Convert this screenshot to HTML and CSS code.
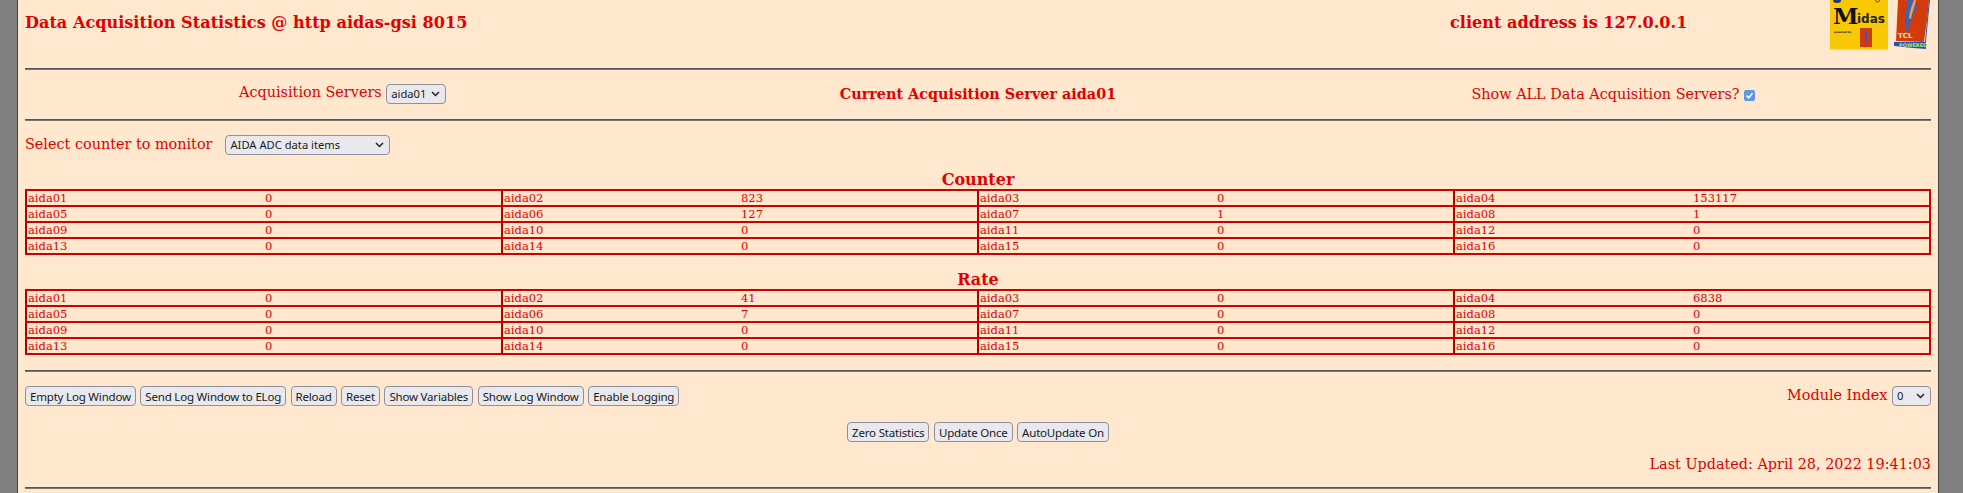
FILE: index.html
```html
<!DOCTYPE html>
<html lang="en">
<head>
<meta charset="utf-8">
<title>Data Acquisition Statistics</title>
<link rel="stylesheet" href="styles.css">
</head>
<body>
<main class="panel">
  <header class="top">
    <h1 class="title">Data Acquisition Statistics @ http aidas-gsi 8015</h1>
    <h1 class="title">client address is 127.0.0.1</h1>
    <div class="logos">
      <svg class="logo-midas" width="58" height="50" viewBox="0 0 58 50" role="img" aria-label="Midas">
        <rect width="58" height="49.500" fill="#f9c805"/>
        <ellipse cx="7" cy="0.500" rx="4" ry="2.500" fill="#1a3a70"/>
        <circle cx="47.500" cy="0" r="2" fill="none" stroke="#2a4a90"/>
        <text x="3" y="24" class="m-big">M</text>
        <text x="27" y="23" class="m-rest">idas</text>
        <text x="4" y="33" class="m-small">powered by</text>
        <rect x="30" y="28" width="12" height="19" fill="#d03a10"/>
        <path d="M36.500 30c-2 4-1 8-1 13h1c0-4 1-8 1-12z" fill="#3a5ab0"/>
      </svg>
      <svg class="logo-tcl" width="37" height="50" viewBox="0 0 37 50" role="img" aria-label="TCL powered">
        <path d="M5 0H36L35 12L31 42L3 41z" fill="#d23c0a"/>
        <path d="M1 42H33L33 49L20 48L1 46z" fill="#2458b0"/>
        <path d="M36 0H37L35 20L33 42H32L34 20z" fill="#2458b0"/>
        <path d="M15 0c-1 7-3 13-3 22c0 5 1 9 2 12c1-6 3-10 4-14c2-5 5-9 6-14l-2-6z" fill="#3d62b8"/>
        <path d="M21 0c-2 5-4 10-5 18l2 1c1-7 4-12 5-19z" fill="#f0a040"/>
        <text x="5" y="38" class="t-tcl">TCL</text>
        <text x="6" y="46.500" class="t-pow">POWERED</text>
      </svg>
    </div>
  </header>
  <hr class="rule">
  <section class="servers">
    <div class="servers-cell"><span class="label">Acquisition Servers</span> <select class="ctl server-select"><option>aida01</option></select></div>
    <div class="servers-cell"><strong class="current">Current Acquisition Server aida01</strong></div>
    <div class="servers-cell"><span class="label">Show ALL Data Acquisition Servers?</span> <input class="check" type="checkbox" checked></div>
  </section>
  <hr class="rule">
  <section class="monitor">
    <span class="label monitor-label">Select counter to monitor</span>
    <select class="ctl monitor-select"><option>AIDA ADC data items</option></select>
  </section>

  <h2 class="heading">Counter</h2>
  <table class="stats">
    <tr><td>aida01</td><td>0</td><td>aida02</td><td>823</td><td>aida03</td><td>0</td><td>aida04</td><td>153117</td></tr>
    <tr><td>aida05</td><td>0</td><td>aida06</td><td>127</td><td>aida07</td><td>1</td><td>aida08</td><td>1</td></tr>
    <tr><td>aida09</td><td>0</td><td>aida10</td><td>0</td><td>aida11</td><td>0</td><td>aida12</td><td>0</td></tr>
    <tr><td>aida13</td><td>0</td><td>aida14</td><td>0</td><td>aida15</td><td>0</td><td>aida16</td><td>0</td></tr>
  </table>

  <h2 class="heading heading-rate">Rate</h2>
  <table class="stats">
    <tr><td>aida01</td><td>0</td><td>aida02</td><td>41</td><td>aida03</td><td>0</td><td>aida04</td><td>6838</td></tr>
    <tr><td>aida05</td><td>0</td><td>aida06</td><td>7</td><td>aida07</td><td>0</td><td>aida08</td><td>0</td></tr>
    <tr><td>aida09</td><td>0</td><td>aida10</td><td>0</td><td>aida11</td><td>0</td><td>aida12</td><td>0</td></tr>
    <tr><td>aida13</td><td>0</td><td>aida14</td><td>0</td><td>aida15</td><td>0</td><td>aida16</td><td>0</td></tr>
  </table>

  <hr class="rule rule-lower">
  <section class="actions">
    <div class="btns">
      <button class="btn">Empty Log Window</button>
      <button class="btn">Send Log Window to ELog</button>
      <button class="btn">Reload</button>
      <button class="btn">Reset</button>
      <button class="btn">Show Variables</button>
      <button class="btn">Show Log Window</button>
      <button class="btn">Enable Logging</button>
    </div>
    <div class="module"><span class="label">Module Index</span> <select class="ctl module-select"><option>0</option></select></div>
  </section>
  <section class="center-btns">
    <button class="btn">Zero Statistics</button>
    <button class="btn">Update Once</button>
    <button class="btn">AutoUpdate On</button>
  </section>
  <p class="updated">Last Updated: April 28, 2022 19:41:03</p>
  <hr class="rule">
</main>
</body>
</html>
```
FILE: styles.css
```css
html, body {
  margin: 0;
  height: 100%;
  overflow: hidden;
}
body {
  background: #808080;
  font-family: "DejaVu Serif", serif;
  color: #e00000;
}
.panel {
  box-sizing: border-box;
  width: 1922px;
  height: 493px;
  margin-left: 17px;
  padding: 0 7px;
  background: #ffe8cd;
  border-left: 1px solid #444;
  border-right: 1px solid #444;
  overflow: hidden;
}
.top {
  display: grid;
  grid-template-columns: 1425px 1fr auto;
  height: 50px;
  margin-bottom: 18px;
}
.title {
  margin: 13px 0 0;
  font-size: 16.13px;
  font-weight: bold;
  line-height: 19px;
}
.logos {
  display: flex;
  gap: 5px;
  margin-right: 1px;
}
.rule {
  margin: 0;
  height: 0;
  border: 0;
  border-top: 1px solid #555;
  border-bottom: 1px solid #777;
}
.servers {
  box-sizing: border-box;
  display: grid;
  grid-template-columns: repeat(3, 1fr);
  align-items: center;
  height: 49px;
  padding-bottom: 2px;
}
.servers-cell {
  text-align: center;
  font-size: 14.4px;
}
.label {
  font-size: 14.4px;
}
.current {
  font-size: 14.4px;
  font-weight: bold;
}
.check {
  appearance: none;
  box-sizing: border-box;
  margin: 0;
  width: 11px;
  height: 11px;
  border-radius: 2px;
  background: #5b9ae0 url("data:image/svg+xml,%3Csvg xmlns='http://www.w3.org/2000/svg' width='11' height='11'%3E%3Cpath d='M2.500 5.500l2.200 2.200L8.500 3.200' fill='none' stroke='%23fff' stroke-width='1.600'/%3E%3C/svg%3E") no-repeat center;
  vertical-align: -2px;
}
.ctl {
  box-sizing: border-box;
  height: 20px;
  padding: 0 14px 1px 4px;
  border: 1px solid #8f8f9d;
  border-radius: 4px;
  background: #e9e9ed url("data:image/svg+xml,%3Csvg xmlns='http://www.w3.org/2000/svg' width='9' height='6'%3E%3Cpath d='M1 1l3.500 3.500L8 1' fill='none' stroke='%23222' stroke-width='1.500'/%3E%3C/svg%3E") no-repeat right 5px center;
  appearance: none;
  font: 11.2px "Noto Sans", sans-serif;
  color: #1a1a1a;
}
.server-select {
  width: 60px;
  vertical-align: -1px;
}
.monitor {
  display: flex;
  align-items: center;
  gap: 13px;
  height: 48px;
}
.monitor-label {
  padding-bottom: 2px;
}
.monitor-select {
  width: 165px;
}
.heading {
  margin: 0;
  padding-top: 1px;
  text-align: center;
  font-size: 16px;
  font-weight: bold;
  line-height: 19px;
}
.heading-rate {
  padding-top: 15px;
}
.stats {
  width: 100%;
  table-layout: fixed;
  border-collapse: collapse;
  border: 2px solid #d00000;
  font-size: 11.52px;
}
.stats td {
  padding: 0 1px;
  height: 14px;
  line-height: 14px;
  border-top: 2px solid #d00000;
  border-bottom: 2px solid #d00000;
}
.stats td:nth-child(odd) {
  border-left: 2px solid #b00000;
}
.rule-lower {
  margin-top: 15px;
}
.actions {
  display: flex;
  justify-content: space-between;
  align-items: center;
  height: 48px;
}
.btns {
  display: flex;
  gap: 4.5px;
}
.btn {
  box-sizing: border-box;
  height: 20px;
  padding: 0 4px;
  border: 1px solid #8f8f9d;
  border-radius: 4px;
  background: #e9e9ed;
  font: 11.52px "Noto Sans", sans-serif;
  letter-spacing: -0.2px;
  color: #1a1a1a;
}
.module {
  font-size: 14.4px;
}
.module-select {
  width: 39px;
}
.center-btns {
  display: flex;
  justify-content: center;
  gap: 4.5px;
  padding-top: 2px;
}
.updated {
  margin: 14px 0 14px;
  text-align: right;
  font-size: 14.4px;
  line-height: 17px;
}
.m-big {
  font: bold 23px "DejaVu Serif", serif;
  fill: #111;
}
.m-rest {
  font: bold 12px "DejaVu Sans", sans-serif;
  fill: #222;
}
.m-small {
  font: bold 2.600px "DejaVu Sans", sans-serif;
  fill: #222;
}
.t-tcl {
  font: bold 7px "DejaVu Sans", sans-serif;
  fill: #ffe8c0;
}
.t-pow {
  font: bold 5px "DejaVu Sans", sans-serif;
  fill: #b8e070;
}
```
